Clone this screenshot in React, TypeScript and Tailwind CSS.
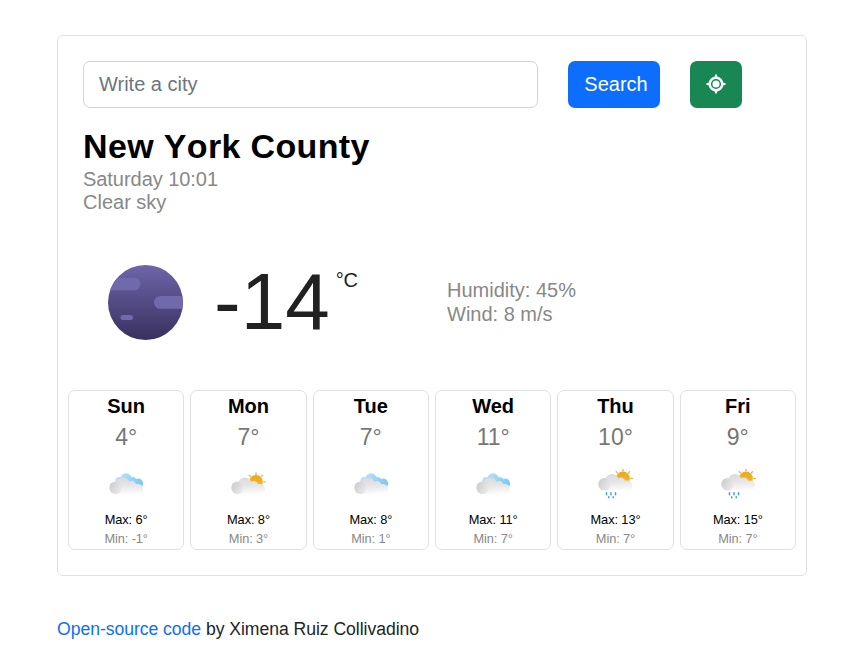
type Kind = "clouds" | "partly" | "rain";

const days: { day: string; temp: string; kind: Kind; max: string; min: string }[] = [
  { day: "Sun", temp: "4°", kind: "clouds", max: "6°", min: "-1°" },
  { day: "Mon", temp: "7°", kind: "partly", max: "8°", min: "3°" },
  { day: "Tue", temp: "7°", kind: "clouds", max: "8°", min: "1°" },
  { day: "Wed", temp: "11°", kind: "clouds", max: "11°", min: "7°" },
  { day: "Thu", temp: "10°", kind: "rain", max: "13°", min: "7°" },
  { day: "Fri", temp: "9°", kind: "rain", max: "15°", min: "7°" },
];

function Gradients() {
  return (
    <svg width="0" height="0" className="absolute" aria-hidden="true">
      <defs>
        <linearGradient id="cloud" gradientUnits="userSpaceOnUse" x1="24" y1="16" x2="25" y2="33">
          <stop offset="0" stopColor="#dadada" />
          <stop offset="0.5" stopColor="#e6e6e6" />
          <stop offset="1" stopColor="#fcfcfc" />
        </linearGradient>
        <linearGradient id="puff" x1="0" y1="0.2" x2="1" y2="0.8">
          <stop offset="0" stopColor="#cbcbcb" />
          <stop offset="1" stopColor="#ededed" />
        </linearGradient>
        <linearGradient id="blue" gradientUnits="userSpaceOnUse" x1="22" y1="12" x2="40" y2="24">
          <stop offset="0" stopColor="#b0dffa" />
          <stop offset="1" stopColor="#7ac8f5" />
        </linearGradient>
        <linearGradient id="sun" x1="0" y1="0" x2="0" y2="1">
          <stop offset="0" stopColor="#e8a820" />
          <stop offset="1" stopColor="#f7bd2c" />
        </linearGradient>
      </defs>
    </svg>
  );
}

function WeatherIcon({ kind }: { kind: Kind }) {
  return (
    <svg width="50" height="50" viewBox="-0.5 0 50 50" className="block">
      <g transform={kind === "rain" ? "translate(0 -3.5)" : undefined}>
        {kind === "clouds" ? (
          <g fill="url(#blue)">
            <circle cx="24.5" cy="18" r="5.8" />
            <circle cx="17.8" cy="20" r="3.9" />
            <circle cx="31" cy="20.3" r="4.3" />
            <circle cx="37" cy="21.6" r="4.2" />
            <rect x="24" y="20" width="17.4" height="5.8" rx="2" />
          </g>
        ) : (
          <g>
            <circle cx="32.5" cy="20.9" r="6.9" fill="url(#sun)" />
            <path
              d="M32.5 13.400v-1.400M27 15.400l-1.300-1.300M37.900 15.400l1.300-1.300M40.300 20.900h1.500"
              stroke="#edb02b"
              strokeWidth="1.3"
              strokeLinecap="round"
            />
          </g>
        )}
        <g fill="url(#cloud)">
          <circle cx="21.5" cy="23.1" r="6.7" />
          <circle cx="30.3" cy="24.8" r="4.7" />
          <circle cx="36.6" cy="27.9" r="4.8" />
          <rect x="14" y="23.5" width="23" height="9.5" />
          <rect x="33" y="25" width="8.4" height="8" rx="3" />
        </g>
        <circle cx="14.1" cy="26.8" r="6.3" fill="url(#puff)" />
      </g>
      {kind === "rain" && (
        <path
          d="M16 31.8v2M20.5 31.800v2M25 31.800v2M18.200 35.800v1M22.700 35.800v1"
          stroke="#4a9fd2"
          strokeWidth="1.5"
          strokeLinecap="round"
        />
      )}
    </svg>
  );
}

function NightIcon() {
  return (
    <svg width="76" height="76" viewBox="0 0 76 76" className="block">
      <defs>
        <linearGradient id="night" x1="0" y1="0" x2="0" y2="1">
          <stop offset="0" stopColor="#6e66aa" />
          <stop offset="1" stopColor="#39305f" />
        </linearGradient>
        <clipPath id="disc">
          <circle cx="38.5" cy="38.5" r="37.5" />
        </clipPath>
      </defs>
      <g clipPath="url(#disc)">
        <rect width="76" height="76" fill="url(#night)" />
        <rect x="-10" y="13.8" width="43.5" height="12.4" rx="6.2" fill="#7069ac" />
        <rect x="47" y="32" width="40" height="12.8" rx="6.4" fill="#7069ac" />
        <rect x="13.5" y="50.9" width="12.5" height="5" rx="2.5" fill="#7069ac" />
      </g>
    </svg>
  );
}

function LocateIcon() {
  return (
    <svg width="20" height="20" viewBox="0 0 20 20" className="block" fill="#fff">
      <path d="M10 0Q11.200.4 11.400 3.200H8.600Q8.800.4 10 0zM10 20Q11.200 19.600 11.400 16.800H8.600Q8.800 19.600 10 20zM0 10Q.4 8.800 3.200 8.600V11.400Q.4 11.200 0 10zM20 10Q19.600 8.800 16.800 8.600V11.400Q19.600 11.200 20 10z" />
      <circle cx="10" cy="10" r="7.5" />
      <circle cx="10" cy="10" r="4.3" fill="none" stroke="#198754" strokeWidth="1.5" />
    </svg>
  );
}

export default function App() {
  return (
    <div className="min-h-[671px] bg-white pl-[57px] pt-[35px] font-['Liberation_Sans',Arial,sans-serif] text-[#212529]">
      <Gradients />
      <main className="h-[541px] w-[750px] rounded-[6px] border border-[#dee2e6] pt-[25px]">
        <form className="flex pl-[25px]" onSubmit={(e) => e.preventDefault()}>
          <input
            type="text"
            placeholder="Write a city"
            className="h-[47px] w-[455px] rounded-[7px] border border-[#ced4da] px-[15px] text-[20px] placeholder:text-[#6c757d]"
          />
          <button className="ml-[30px] h-[47px] w-[92px] rounded-[7px] bg-[#0d6efd] pb-[2px] pl-[4px] text-[20px] text-white">
            Search
          </button>
          <button
            aria-label="Current location"
            className="ml-[30px] flex h-[47px] w-[52px] items-center justify-center rounded-[7px] bg-[#198754] pb-[2px]"
          >
            <LocateIcon />
          </button>
        </form>

        <section className="pl-[25px] pt-[17px]">
          <h1 className="text-[34px] leading-[43px] font-bold tracking-[0.35px] text-black [font-kerning:none]">New York County</h1>
          <p className="text-[20px] leading-[23px] tracking-[-0.05px] text-[#888]">Saturday 10:01</p>
          <p className="text-[20px] leading-[23px] text-[#888]">Clear sky</p>
        </section>

        <section className="flex h-[176px] pl-[49px]">
          <div className="w-[107px] pt-[50px]">
            <NightIcon />
          </div>
          <div className="flex w-[233px] items-start pt-[42px] text-[#212121]">
            <span className="text-[80px] leading-[92px]">-14</span>
            <span className="ml-[6px] pt-[13px] text-[20px] leading-[23px]">°C</span>
          </div>
          <div className="pt-[64px] text-[20px] leading-[24px] text-[#888]">
            <p>Humidity: 45%</p>
            <p>Wind: 8 m/s</p>
          </div>
        </section>

        <section className="ml-[10px] grid w-[728px] grid-cols-6 gap-[6px]">
          {days.map((d) => (
            <article
              key={d.day}
              className="flex h-[160px] flex-col items-center rounded-[7px] border border-[#dee2e6] pt-[3px]"
            >
              <h2 className="text-[20px] leading-[24px] font-bold text-black">{d.day}</h2>
              <p className="mt-[5px] mb-[10px] text-[23px] leading-[28px] text-[#777]">{d.temp}</p>
              <WeatherIcon kind={d.kind} />
              <p className="mt-[-1px] text-[12.8px] leading-[19px] tracking-[-0.1px] text-black">Max: {d.max}</p>
              <p className="text-[12.8px] leading-[19px] tracking-[-0.1px] text-[#888]">Min: {d.min}</p>
            </article>
          ))}
        </section>
      </main>
      <footer className="mt-[40px] text-[17.6px] leading-[26px] tracking-[-0.04px]">
        <a href="#" className="text-[#0d6efd]">Open-source code</a> by Ximena Ruiz Collivadino
      </footer>
    </div>
  );
}
